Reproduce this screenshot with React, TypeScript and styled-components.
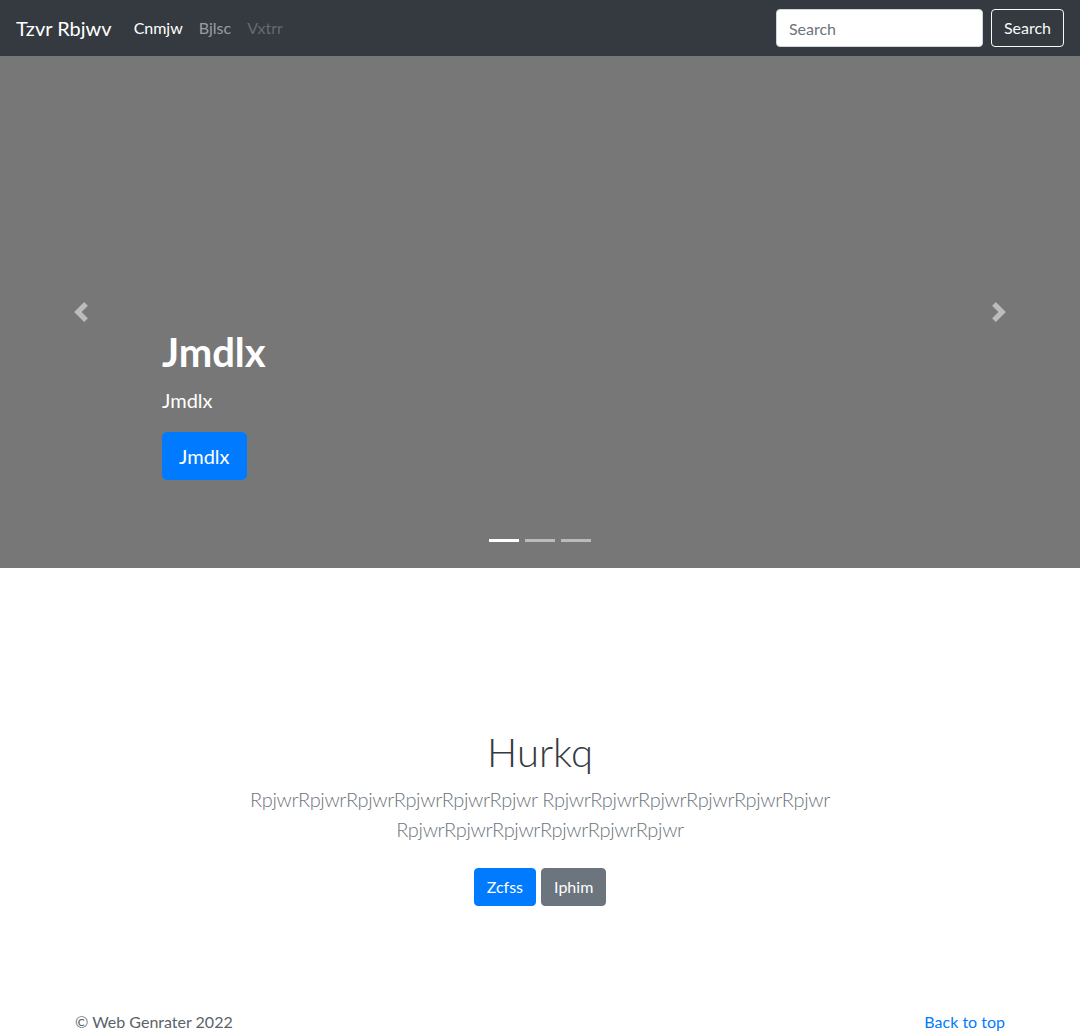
import React from "react";
import styled, { createGlobalStyle, css } from "styled-components";

const GlobalStyle = createGlobalStyle`
  * { box-sizing: border-box; }
  body {
    margin: 0;
    font-family: Lato, "Open Sans", sans-serif;
    font-size: 16px;
    line-height: 1.5;
    color: #212529;
    background: #fff;
  }
`;

const Navbar = styled.nav`
  display: flex;
  align-items: center;
  height: 56px;
  padding: 8px 16px;
  background: #343a40;
`;

const Brand = styled.a`
  font-size: 20px;
  line-height: 30px;
  padding: 5px 0;
  margin-right: 14px;
  color: #fff;
  text-decoration: none;
  white-space: nowrap;
`;

const NavList = styled.ul`
  display: flex;
  list-style: none;
  margin: 0 auto 0 0;
  padding: 0;
`;

const NavLink = styled.a<{ $state: "active" | "normal" | "disabled" }>`
  display: block;
  padding: 8px;
  color: ${(p) =>
    p.$state === "active"
      ? "#fff"
      : p.$state === "disabled"
      ? "rgba(255,255,255,0.25)"
      : "rgba(255,255,255,0.5)"};
  text-decoration: none;
`;

const SearchForm = styled.form`
  display: flex;
  align-items: center;
  gap: 8px;
`;

const SearchInput = styled.input`
  width: 207px;
  height: 38px;
  padding: 6px 12px;
  font: inherit;
  font-size: 16px;
  color: #495057;
  background: #fff;
  border: 1px solid #ced4da;
  border-radius: 4px;
  &::placeholder { color: #6c757d; }
`;

const OutlineButton = styled.button`
  height: 38px;
  padding: 6px 12px;
  font: inherit;
  font-size: 16px;
  line-height: 24px;
  color: #f8f9fa;
  background: transparent;
  border: 1px solid #f8f9fa;
  border-radius: 4px;
`;

const Carousel = styled.div`
  position: relative;
  height: 512px;
  background: #777;
  margin-bottom: 64px;
  overflow: hidden;
`;

const Slide = styled.div`
  display: flex;
  align-items: flex-end;
  height: 100%;
`;

const Caption = styled.div`
  width: 70%;
  margin: 0 15% 48px;
  padding: 20px 0;
  color: #fff;
  text-align: left;
`;

const CaptionTitle = styled.h1`
  margin: 0 0 9px;
  font-size: 40px;
  line-height: 48px;
  font-weight: 700;
`;

const CaptionText = styled.p`
  margin: 0 0 17px;
  font-size: 20px;
  line-height: 30px;
`;

const CaptionActions = styled.div`
  display: flex;
  padding-bottom: 4px;
  margin-bottom: 16px;
`;

const buttonBase = css`
  display: inline-block;
  border: 1px solid transparent;
  border-radius: 4px;
  color: #fff;
  text-decoration: none;
  font-family: inherit;
`;

const LargeButton = styled.a`
  ${buttonBase};
  padding: 8px 16px;
  font-size: 20px;
  line-height: 30px;
  border-radius: 5px;
  background: #007bff;
  border-color: #007bff;
`;

const Control = styled.a<{ $side: "prev" | "next" }>`
  position: absolute;
  top: 0;
  bottom: 0;
  ${(p) => (p.$side === "prev" ? "left: 0;" : "right: 0;")}
  width: 15%;
  display: flex;
  align-items: center;
  justify-content: center;
  opacity: 0.5;
  svg { width: 20px; height: 20px; }
`;

const Indicators = styled.ol`
  position: absolute;
  left: 15%;
  right: 15%;
  bottom: 0;
  display: flex;
  justify-content: center;
  list-style: none;
  margin: 0 0 16px;
  padding: 0;
`;

const Indicator = styled.li<{ $active?: boolean }>`
  width: 30px;
  height: 23px;
  margin: 0 3px;
  border-top: 10px solid transparent;
  border-bottom: 10px solid transparent;
  background: #fff;
  background-clip: padding-box;
  opacity: ${(p) => (p.$active ? 1 : 0.5)};
`;

const Hero = styled.section`
  padding: 96px 0 48px;
  text-align: center;
`;

const HeroInner = styled.div`
  width: 610px;
  margin: 0 auto;
`;

const HeroTitle = styled.h1`
  margin: 0 0 8px;
  font-size: 40px;
  line-height: 48px;
  font-weight: 300;
  color: #343a40;
`;

const Lead = styled.p`
  margin: 0 0 16px;
  font-size: 20px;
  line-height: 30px;
  font-weight: 300;
  letter-spacing: -0.35px;
  color: #6c757d;
`;

const Actions = styled.div`
  display: flex;
  justify-content: center;
  gap: 5px;
`;

const Button = styled.a<{ $variant: "primary" | "secondary" }>`
  ${buttonBase};
  margin: 8px 0;
  padding: 6px 12px;
  font-size: 16px;
  line-height: 24px;
  background: ${(p) => (p.$variant === "primary" ? "#007bff" : "#6c757d")};
  border-color: ${(p) => (p.$variant === "primary" ? "#007bff" : "#6c757d")};
`;

const Footer = styled.footer`
  padding: 48px 0;
  color: #5a6268;
`;

const FooterInner = styled.div`
  display: flex;
  justify-content: space-between;
  width: 930px;
  margin: 0 auto;
`;

const FooterText = styled.p`
  margin: 0 0 4px;
`;

const BackLink = styled.a`
  color: #007bff;
  text-decoration: none;
`;

const Chevron = ({ dir }: { dir: "prev" | "next" }) => (
  <svg viewBox="0 0 8 8" fill="#fff">
    <path
      d={
        dir === "prev"
          ? "M5.25 0l-4 4 4 4 1.5-1.5L4.25 4l2.5-2.5L5.25 0z"
          : "M2.75 0l-1.5 1.5L3.75 4l-2.5 2.5L2.75 8l4-4-4-4z"
      }
    />
  </svg>
);

export default function App() {
  return (
    <>
      <GlobalStyle />
      <Navbar>
        <Brand href="#">Tzvr Rbjwv</Brand>
        <NavList>
          <li><NavLink $state="active" href="#">Cnmjw</NavLink></li>
          <li><NavLink $state="normal" href="#">Bjlsc</NavLink></li>
          <li><NavLink $state="disabled" href="#">Vxtrr</NavLink></li>
        </NavList>
        <SearchForm onSubmit={(e) => e.preventDefault()}>
          <SearchInput type="text" placeholder="Search" />
          <OutlineButton type="submit">Search</OutlineButton>
        </SearchForm>
      </Navbar>

      <Carousel>
        <Slide>
          <Caption>
            <CaptionTitle>Jmdlx</CaptionTitle>
            <CaptionText>Jmdlx</CaptionText>
            <CaptionActions>
              <LargeButton href="#">Jmdlx</LargeButton>
            </CaptionActions>
          </Caption>
        </Slide>
        <Control $side="prev" href="#"><Chevron dir="prev" /></Control>
        <Control $side="next" href="#"><Chevron dir="next" /></Control>
        <Indicators>
          <Indicator $active />
          <Indicator />
          <Indicator />
        </Indicators>
      </Carousel>

      <Hero>
        <HeroInner>
          <HeroTitle>Hurkq</HeroTitle>
          <Lead>
            RpjwrRpjwrRpjwrRpjwrRpjwrRpjwr RpjwrRpjwrRpjwrRpjwrRpjwrRpjwr RpjwrRpjwrRpjwrRpjwrRpjwrRpjwr
          </Lead>
          <Actions>
            <Button $variant="primary" href="#">Zcfss</Button>
            <Button $variant="secondary" href="#">Iphim</Button>
          </Actions>
        </HeroInner>
      </Hero>

      <Footer>
        <FooterInner>
          <FooterText>© Web Genrater 2022</FooterText>
          <FooterText><BackLink href="#">Back to top</BackLink></FooterText>
        </FooterInner>
      </Footer>
    </>
  );
}
